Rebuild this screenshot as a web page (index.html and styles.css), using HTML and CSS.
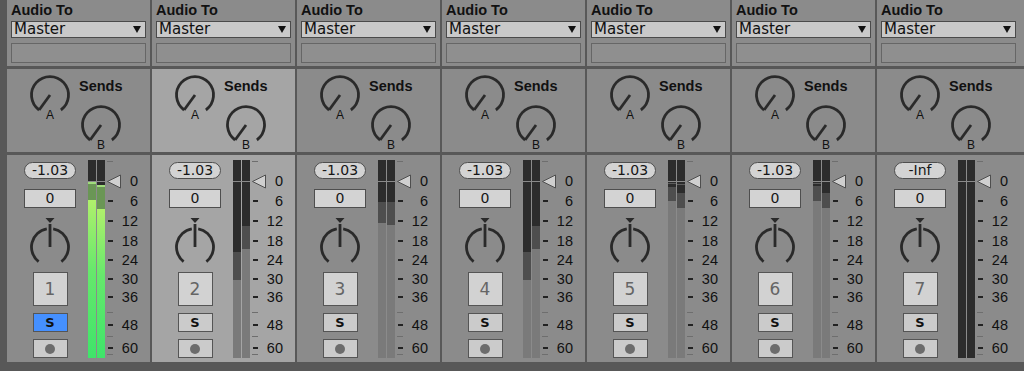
FILE: index.html
```html
<!DOCTYPE html>
<html lang="en">
<head>
  <meta charset="UTF-8">
  <title>Mixer</title>
  <link rel="stylesheet" href="styles.css">
</head>
<body>

  <div class="mixer" id="mixer"></div>

  <script>
    // meter segments from top to bottom: [kind, height in px], last one fills the rest
    const channels = [
      { vol: '-1.03', solo: true,
        meter: [[['dark', 22], ['peak', 2], ['dim', 16], ['lit']], [['dark', 25], ['peak', 2], ['dim', 22], ['lit']]] },
      { vol: '-1.03', selected: true,
        meter: [[['dark', 92], ['mid', 28], ['off']], [['dark', 66], ['mid', 23], ['off']]] },
      { vol: '-1.03',
        meter: [[['dark', 42], ['mid', 21], ['off']], [['dark', 42], ['mid', 23], ['off']]] },
      { vol: '-1.03',
        meter: [[['dark', 92], ['mid', 28], ['off']], [['dark', 66], ['mid', 23], ['off']]] },
      { vol: '-1.03',
        meter: [[['dark', 23], ['hold', 1], ['dark', 3], ['mid', 14], ['off']], [['dark', 24], ['hold', 1], ['dark', 8], ['mid', 15], ['off']]] },
      { vol: '-1.03',
        meter: [[['dark', 23], ['hold', 1], ['dark', 2], ['mid', 15], ['off']], [['dark', 33], ['mid', 15], ['off']]] },
      { vol: '-Inf',
        meter: [[['dark']], [['dark']]] }
    ];

    // y of each mark, measured from the top of the channel panel
    const scale = [
      { y: 6, minor: true },
      { y: 26, label: '0', zero: true },
      { y: 46, label: '6' },
      { y: 66, label: '12' },
      { y: 85.5, label: '18' },
      { y: 104.5, label: '24' },
      { y: 123.5, label: '30' },
      { y: 142, label: '36' },
      { y: 157, minor: true },
      { y: 169.5, label: '48' },
      { y: 181, minor: true },
      { y: 192.5, label: '60' },
      { y: 199, minor: true }
    ];

    function sendKnob(letter) {
      return `<svg class="send-knob" width="44" height="50" viewBox="0 0 44 50">
          <path class="knob-line" d="M11.1 37A18.5 18.5 0 1 1 32.9 37"/>
          <line class="knob-line" x1="22" y1="22" x2="11.1" y2="37"/>
          <text class="knob-letter" x="22" y="45.5">${letter}</text>
        </svg>`;
    }

    function panKnob() {
      return `<svg class="pan-knob" width="44" height="50" viewBox="0 0 44 50">
          <polygon class="knob-mark" points="17.5,1 26.5,1 22,6"/>
          <path class="knob-line" d="M10.6 44.6A18.5 18.5 0 0 1 18.8 11.8"/>
          <path class="knob-line" d="M25.2 11.8A18.5 18.5 0 0 1 33.4 44.6"/>
          <line class="knob-line" x1="22" y1="7" x2="22" y2="30"/>
        </svg>`;
    }

    function meterBar(segs) {
      const parts = segs.map(([kind, h]) => h
        ? `<div class="seg ${kind}" style="height:${h}px"></div>`
        : `<div class="seg ${kind} rest"></div>`);
      return `<div class="meter-bar">${parts.join('')}</div>`;
    }

    function scaleMarks() {
      return scale.map(m => {
        if (m.minor) return `<span class="tick minor" style="top:${m.y}px"></span>`;
        let html = `<span class="db" style="top:${m.y - 8}px">${m.label}</span>`;
        if (m.zero) {
          html += `<svg class="zero-mark" style="top:${m.y - 7}px" width="16" height="15" viewBox="0 0 16 15">
              <polygon points="1.5,7.5 14.5,1 14.5,14" />
            </svg>`;
        } else {
          html += `<span class="tick" style="top:${m.y - 1}px"></span>`;
        }
        return html;
      }).join('');
    }

    mixer.innerHTML = channels.map((ch, i) => `
      <div class="strip ${ch.selected ? 'selected' : ''}">
        <div class="routing">
          <div class="routing-label">Audio To</div>
          <div class="dropdown"><span>Master</span><i class="caret"></i></div>
          <div class="routing-empty"></div>
        </div>
        <div class="sends">
          ${sendKnob('A')}
          <div class="sends-right">
            <div class="sends-label">Sends</div>
            ${sendKnob('B')}
          </div>
        </div>
        <div class="channel">
          <div class="controls">
            <div class="volume">${ch.vol}</div>
            <div class="pan-value">0</div>
            ${panKnob()}
            <div class="track-btn">${i + 1}</div>
            <div class="solo-btn ${ch.solo ? 'on' : ''}">S</div>
            <div class="arm-btn"><span class="arm-dot"></span></div>
          </div>
          <div class="meter">
            ${ch.meter.map(meterBar).join('')}
            <div class="zero-line"></div>
          </div>
          <div class="scale">${scaleMarks()}</div>
        </div>
      </div>`).join('');
  </script>

</body>
</html>
```

FILE: styles.css
```css
body {
  margin: 0;
  height: 371px;
  overflow: hidden;
  background: #585858;
  font-family: 'DejaVu Sans', sans-serif;
  color: #161616;
}

.mixer {
  display: flex;
  gap: 2px;
  padding-left: 7px;
}

.strip {
  width: 143px;
  flex-shrink: 0;
  display: flex;
  flex-direction: column;
  gap: 3px;
}

.strip:last-child {
  flex-grow: 1;
}

/* routing */

.routing {
  height: 66px;
  box-sizing: border-box;
  padding: 0 4px;
  background: #8b8b8b;
}

.routing-label,
.sends-label {
  font: bold 14.5px/17px 'Liberation Sans', sans-serif;
  color: #111;
}

.routing-label {
  padding-top: 1px;
  line-height: 18px;
}

.dropdown {
  margin-top: 2px;
  width: 135px;
  height: 17px;
  box-sizing: border-box;
  border: 1px solid #4a4a4a;
  background: #c9c9c9;
  display: flex;
  align-items: center;
  justify-content: space-between;
  padding: 0 4px 0 2px;
  font-size: 15px;
  line-height: 15px;
  color: #111;
}

.caret {
  width: 0;
  height: 0;
  border-left: 4.5px solid transparent;
  border-right: 4.5px solid transparent;
  border-top: 7px solid #111;
}

.routing-empty {
  margin-top: 5px;
  width: 135px;
  height: 20px;
  box-sizing: border-box;
  border: 1px solid #666;
  background: #8f8f8f;
}

/* sends */

.sends {
  height: 83px;
  box-sizing: border-box;
  padding: 4px 0 0 21px;
  background: #8b8b8b;
  display: flex;
  gap: 7px;
}

.sends-right {
  padding-top: 5px;
}

.sends-label {
  line-height: 16px;
}

.sends-right .send-knob {
  display: block;
  margin-top: 9px;
}

.knob-line {
  fill: none;
  stroke: #2a2a2a;
  stroke-width: 2.8;
}

.knob-mark {
  fill: #2a2a2a;
}

.knob-letter {
  font: 12px 'Liberation Sans', sans-serif;
  text-anchor: middle;
  fill: #111;
}

/* channel */

.channel {
  height: 207px;
  box-sizing: border-box;
  padding-left: 5px;
  background: #8b8b8b;
  display: flex;
}

.selected .sends,
.selected .channel {
  background: #a5a5a5;
}

.controls {
  width: 76px;
  padding-top: 7px;
  display: flex;
  flex-direction: column;
  align-items: center;
}

.volume,
.pan-value {
  width: 52px;
  box-sizing: border-box;
  border: 1px solid #4e4e4e;
  background: #d3d3d3;
  text-align: center;
  font-size: 14px;
}

.volume {
  height: 17px;
  line-height: 15px;
  border-radius: 9px;
}

.pan-value {
  margin-top: 10px;
  height: 19px;
  line-height: 17px;
}

.pan-knob {
  display: block;
  margin-top: 9px;
}

.track-btn,
.solo-btn,
.arm-btn {
  width: 35px;
  box-sizing: border-box;
  border: 1px solid #555;
  background: #cbcbcb;
  display: flex;
  align-items: center;
  justify-content: center;
}

.track-btn {
  margin-top: 5px;
  height: 34px;
  background: #d2d2d2;
  font-size: 17px;
  color: #656565;
}

.solo-btn {
  margin-top: 7px;
  height: 19px;
  font-size: 13px;
  font-weight: bold;
  color: #111;
}

.solo-btn.on {
  background: #4590ff;
}

.arm-btn {
  margin-top: 7px;
  height: 19px;
}

.arm-dot {
  width: 10px;
  height: 10px;
  border-radius: 50%;
  background: #6c6c6c;
}

/* meter */

.meter {
  position: relative;
  margin-top: 5px;
  height: 198px;
  display: flex;
  gap: 1px;
}

.meter-bar {
  width: 8px;
  display: flex;
  flex-direction: column;
}

.seg.rest {
  flex: 1;
}

.seg.dark { background: #2c2c2c; }
.seg.mid { background: #4e4e4e; }
.seg.off { background: #7a7a7a; }
.seg.hold { background: #5c5c5c; }
.seg.peak { background: #a0dc7c; }
.seg.dim { background: #6a9655; }
.seg.lit { background: linear-gradient(#b0f06c, #66e86c 45%, #3fe46a); }

.zero-line {
  position: absolute;
  left: 0;
  right: 0;
  top: 21px;
  height: 1px;
  background: #8a8a8a;
}

.scale {
  position: relative;
  width: 34px;
}

.db {
  position: absolute;
  right: 1px;
  font: 14.5px/16px 'Liberation Sans', sans-serif;
  color: #111;
}

.tick {
  position: absolute;
  left: 3px;
  width: 5px;
  height: 2px;
  background: #222;
}

.tick.minor {
  left: 2px;
  width: 6px;
  height: 1px;
  background: #6e6e6e;
}

.zero-mark {
  position: absolute;
  left: 1px;
}

.zero-mark polygon {
  fill: #cfcfcf;
  stroke: #4e4e4e;
  stroke-width: 1;
}
```
